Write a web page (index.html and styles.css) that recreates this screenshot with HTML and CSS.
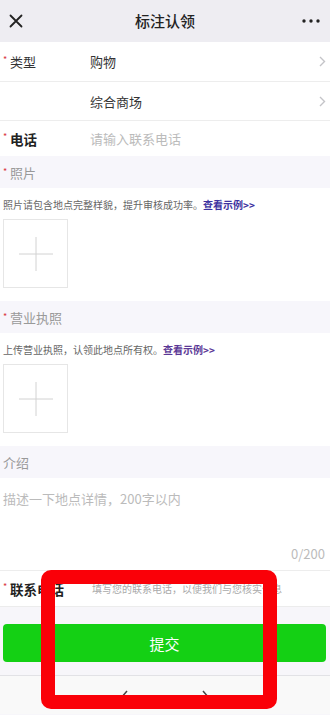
FILE: index.html
```html
<!DOCTYPE html>
<html lang="zh-CN">
<head>
    <meta charset="UTF-8">
    <meta name="viewport" content="width=device-width, initial-scale=1.0">
    <title>标注认领</title>
    <link rel="stylesheet" href="styles.css">
</head>
<body>

    <header class="nav-bar">
        <svg class="close" width="14" height="14" viewBox="0 0 14 14">
            <path d="M1.5 1.5 L12.5 12.5 M12.5 1.5 L1.5 12.5" stroke="#222" stroke-width="1.8" stroke-linecap="round"/>
        </svg>
        <h1>标注认领</h1>
        <svg class="more" width="18" height="4" viewBox="0 0 18 4">
            <circle cx="2" cy="2" r="1.7" fill="#222"/>
            <circle cx="9" cy="2" r="1.7" fill="#222"/>
            <circle cx="16" cy="2" r="1.7" fill="#222"/>
        </svg>
    </header>

    <div class="rows">
        <div class="row row-type">
            <div class="label"><span class="req">*</span>类型</div>
            <div class="value">购物</div>
            <svg class="arrow" width="7" height="11" viewBox="0 0 7 11"><path d="M1 1 L5.5 5.5 L1 10" fill="none" stroke="#c4c4c8" stroke-width="1.4"/></svg>
        </div>
        <div class="row row-sub">
            <div class="label"></div>
            <div class="value">综合商场</div>
            <svg class="arrow" width="7" height="11" viewBox="0 0 7 11"><path d="M1 1 L5.5 5.5 L1 10" fill="none" stroke="#c4c4c8" stroke-width="1.4"/></svg>
        </div>
        <div class="row row-phone">
            <div class="label strong"><span class="req">*</span>电话</div>
            <div class="value placeholder">请输入联系电话</div>
        </div>
    </div>

    <div class="section-title"><span class="req">*</span>照片</div>
    <div class="upload-block">
        <p class="hint">照片请包含地点完整样貌，提升审核成功率。<a href="#">查看示例&gt;&gt;</a></p>
        <div class="upload-box">
            <svg width="34" height="34" viewBox="0 0 34 34"><path d="M17 0 V34 M0 17 H34" stroke="#d2d2d2" stroke-width="1"/></svg>
        </div>
    </div>

    <div class="section-title"><span class="req">*</span>营业执照</div>
    <div class="upload-block">
        <p class="hint">上传营业执照，认领此地点所有权。<a href="#" class="visited">查看示例&gt;&gt;</a></p>
        <div class="upload-box">
            <svg width="34" height="34" viewBox="0 0 34 34"><path d="M17 0 V34 M0 17 H34" stroke="#d2d2d2" stroke-width="1"/></svg>
        </div>
    </div>

    <div class="section-title plain">介绍</div>
    <div class="intro">
        <p class="placeholder">描述一下地点详情，200字以内</p>
        <p class="count">0/200</p>
    </div>

    <div class="row row-contact">
        <div class="label strong"><span class="req">*</span>联系电话</div>
        <div class="value small-tip">填写您的联系电话，以便我们与您核实信息</div>
    </div>

    <div class="submit-wrap">
        <button class="submit">提交</button>
    </div>

    <footer class="toolbar">
        <svg width="10" height="16" viewBox="0 0 10 16"><path d="M8 1 L2 8 L8 15" fill="none" stroke="#444" stroke-width="1.5"/></svg>
        <svg width="10" height="16" viewBox="0 0 10 16"><path d="M2 1 L8 8 L2 15" fill="none" stroke="#444" stroke-width="1.5"/></svg>
    </footer>

    <div class="red-mark"></div>

</body>
</html>
```

FILE: styles.css
```css
body {
    margin: 0;
    width: 330px;
    height: 715px;
    overflow: hidden;
    position: relative;
    font-family: "Noto Sans CJK SC", "Noto Sans", sans-serif;
    color: #333;
    background-color: #f7f6fa;
}
p {
    margin: 0;
}
.nav-bar {
    height: 42px;
    background-color: #eeedf2;
    display: flex;
    align-items: center;
    justify-content: space-between;
    padding: 0 10px 0 9px;
    box-sizing: border-box;
}
.nav-bar h1 {
    margin: 0;
    font-size: 15px;
    font-weight: 500;
    color: #222;
    position: absolute;
    left: 0;
    right: 0;
    top: 11px;
    text-align: center;
    pointer-events: none;
    line-height: 20px;
}
.rows {
    background-color: #fff;
}
.row {
    display: flex;
    align-items: center;
    padding: 0 4px 0 3px;
    background-color: #fff;
    border-bottom: 1px solid #ededed;
}
.row-type {
    height: 39px;
}
.row-sub {
    height: 38px;
}
.row-phone {
    height: 35px;
    border-bottom: none;
}
.label {
    width: 87px;
    font-size: 13px;
    color: #333;
    display: flex;
    align-items: center;
}
.label.strong {
    font-weight: 700;
    font-size: 13.5px;
    color: #222;
}
.req {
    color: #d9363e;
    font-size: 9px;
    font-weight: 400;
    width: 7px;
    display: inline-block;
    position: relative;
    top: -2px;
}
.value {
    flex: 1;
    font-size: 13px;
    color: #333;
}
.placeholder {
    color: #bbb;
}
.section-title {
    height: 32px;
    display: flex;
    align-items: center;
    padding-left: 3px;
    font-size: 13px;
    color: #999;
    background-color: #f7f6fb;
}
.section-title .req {
    top: -1px;
}
.upload-block {
    background-color: #fff;
    padding: 10px 3px 13px;
}
.hint {
    font-size: 10px;
    line-height: 14px;
    color: #666;
}
.hint a {
    color: #3d32a0;
    font-weight: 700;
    text-decoration: none;
}
.hint a.visited {
    color: #5b3896;
}
.upload-box {
    margin-top: 7px;
    width: 65px;
    height: 69px;
    box-sizing: border-box;
    border: 1px solid #e6e6e6;
    display: flex;
    align-items: center;
    justify-content: center;
}
.intro {
    height: 93px;
    background-color: #fff;
    border-bottom: 1px solid #ededed;
    padding: 12px 5px 0 3px;
    box-sizing: border-box;
    display: flex;
    flex-direction: column;
}
.intro .placeholder {
    font-size: 13px;
    line-height: 18px;
}
.intro .count {
    margin-top: auto;
    margin-bottom: 7px;
    text-align: right;
    font-size: 13px;
    color: #bbb;
}
.row-contact {
    height: 35px;
    border-bottom: 1px solid #ececec;
}
.small-tip {
    font-size: 10px;
    color: #aaa;
    margin-left: 2px;
}
.submit-wrap {
    padding: 17px 4px 13px 3px;
    border-bottom: 1px solid #e2e2e6;
}
.submit {
    width: 100%;
    height: 38px;
    border: none;
    border-radius: 4px;
    background-color: #14d014;
    color: #fff;
    font-family: inherit;
    font-size: 15px;
}
.toolbar {
    height: 38px;
    background-color: #f9f9f9;
    display: flex;
    align-items: center;
    justify-content: center;
    gap: 72px;
    padding-top: 6px;
    box-sizing: border-box;
}
.red-mark {
    position: absolute;
    left: 41px;
    top: 570px;
    width: 236px;
    height: 139px;
    box-sizing: border-box;
    border: 14px solid #fa0008;
    border-radius: 10px;
}
```
